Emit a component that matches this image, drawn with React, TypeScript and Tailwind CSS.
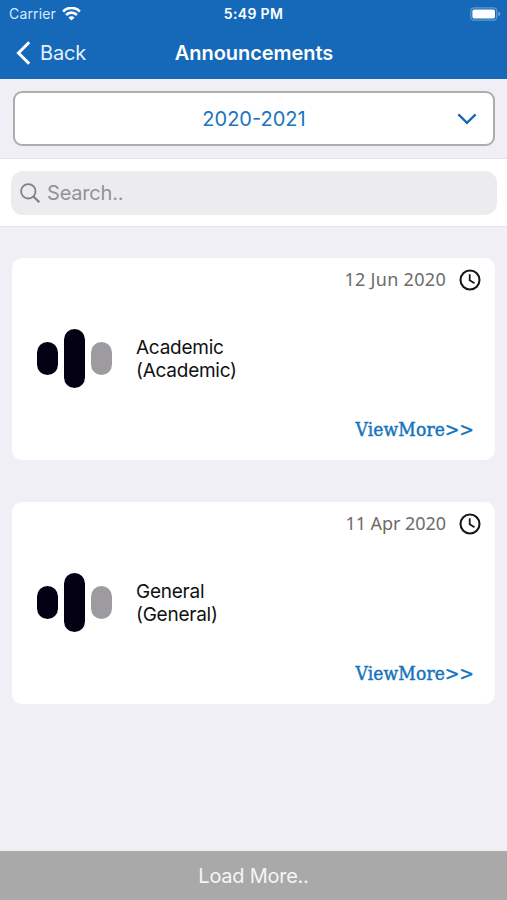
const announcements = [
  { title: "Academic", category: "(Academic)", date: "12 Jun 2020", dateSpacing: "tracking-[0.3px]" },
  { title: "General", category: "(General)", date: "11 Apr 2020", dateSpacing: "tracking-[-0.05px]" },
];

function Wifi() {
  return (
    <svg className="ml-[6px] h-[14px] w-[19px]" viewBox="0 0 19 14" fill="none" stroke="#fff" strokeWidth="2.7">
      <path d="M1.1 4.6C5.8-.3 13.2-.3 17.9 4.6" />
      <path d="M4.1 8c3-3.1 7.8-3.1 10.8 0" />
      <path d="M9.5 13.6 6.4 10.5c1.7-1.7 4.5-1.7 6.2 0z" fill="#fff" stroke="none" />
    </svg>
  );
}

function Battery() {
  return (
    <svg className="h-[14px] w-[31px]" viewBox="0 0 31 14" fill="none">
      <rect x=".8" y=".8" width="26" height="12.4" rx="3.5" stroke="#6299d2" strokeWidth="1.3" />
      <rect x="2.4" y="2.5" width="22.6" height="9" rx="1.8" fill="#fff" />
      <path d="M28.4 4.8c2.4.6 2.4 3.8 0 4.4z" fill="#75a7da" />
    </svg>
  );
}

function Clock() {
  return (
    <svg className="h-[22px] w-[22px]" viewBox="0 0 22 22" fill="none" stroke="#171717">
      <circle cx="11" cy="11" r="9.5" strokeWidth="2.1" />
      <path d="M10.7 5.2v6l4.8 3" strokeWidth="1.8" />
    </svg>
  );
}

function Card({ item }: { item: (typeof announcements)[number] }) {
  return (
    <article className="flex h-[202px] flex-col rounded-[10px] bg-white">
      <div className="flex h-[43px] items-center justify-end pr-[14px]">
        <time className={`mr-[13px] font-['Noto_Sans',sans-serif] text-[18px] text-[#6c6c6c] ${item.dateSpacing}`}>{item.date}</time>
        <Clock />
      </div>
      <div className="flex h-[115px] items-center pl-[25px]">
        <div className="flex items-center gap-[6px]">
          <div className="h-[33px] w-[21px] rounded-full bg-[#030014]" />
          <div className="h-[59px] w-[21px] rounded-full bg-[#030014]" />
          <div className="h-[33px] w-[21px] rounded-full bg-[#9d9b9f]" />
        </div>
        <div className="ml-[24px] text-[19px] leading-[23px] tracking-[-0.25px] text-[#111]">
          <h2>{item.title}</h2>
          <p>{item.category}</p>
        </div>
      </div>
      <div className="flex h-[26px] items-center justify-end pr-[21px]">
        <button className="font-['DejaVu_Serif_Condensed','DejaVu_Serif',serif] text-[19px] leading-[26px] tracking-[0.15px] text-[#1574bd] [-webkit-text-stroke:0.45px_#1574bd]">ViewMore&gt;&gt;</button>
      </div>
    </article>
  );
}

export default function App() {
  return (
    <div className="flex h-[900px] w-full flex-col bg-[#f0eff5] font-['Inter',sans-serif]">
      <header className="h-[79px] bg-[#1569b8] text-white">
        <div className="grid h-[27px] grid-cols-[1fr_auto_1fr] items-center pr-[6px] pl-[9px]">
          <div className="flex items-center text-[14px] text-[#d9eaff]">
            <span className="tracking-[0.15px]">Carrier</span>
            <Wifi />
          </div>
          <span className="-ml-[3px] text-[14px] font-semibold tracking-[0.35px]">5:49 PM</span>
          <div className="flex justify-end"><Battery /></div>
        </div>
        <div className="grid h-[52px] grid-cols-[1fr_auto_1fr] items-center px-[16px]">
          <button className="flex items-center gap-[9px] text-left text-[20px] tracking-[-0.2px] text-[#e2f0ff]">
            <svg className="h-[24px] w-[15px]" viewBox="0 0 15 24" fill="none" stroke="#fff" strokeWidth="3">
              <path d="M13.2 1.3 2.5 12l10.7 10.7" />
            </svg>
            <span>Back</span>
          </button>
          <h1 className="ml-px text-[20px] font-semibold tracking-[-0.05px]">Announcements</h1>
        </div>
      </header>
      <div className="h-[80px] border-b border-[#e5e4e9] pt-[12px] pr-[12px] pl-[13px]">
        <button className="grid h-[55px] w-full grid-cols-[1fr_auto_1fr] items-center rounded-[9px] border-2 border-[#adadad] bg-white text-[20px] text-[#1b74bd]">
          <span />
          <span>2020-2021</span>
          <svg className="mr-[16px] h-[12px] w-[20px] justify-self-end" viewBox="0 0 20 12" fill="none" stroke="#1767b3" strokeWidth="2.3">
            <path d="m1.4 1.4 8.6 8.5 8.6-8.5" />
          </svg>
        </button>
      </div>
      <div className="h-[68px] border-b border-[#e5e4e9] bg-white pt-[12px] pr-[10px] pl-[11px]">
        <label className="flex h-[44px] items-center rounded-[12px] bg-[#ececee] pl-[9px]">
          <svg className="h-[21px] w-[21px]" viewBox="0 0 21 21" fill="none" stroke="#818185" strokeWidth="1.8">
            <circle cx="8.3" cy="8.3" r="7.2" />
            <path d="m13.5 13.5 5.8 5.8" strokeWidth="2.3" />
          </svg>
          <span className="ml-[6px] text-[20px] tracking-[-0.2px] text-[#929296]">Search..</span>
        </label>
      </div>
      <main className="flex flex-1 flex-col gap-[42px] px-[12px] pt-[31px]">
        {announcements.map((item) => <Card key={item.title} item={item} />)}
      </main>
      <button className="h-[49px] bg-[#a9a9a9] pt-px text-[20px] tracking-[-0.25px] text-[#f5f5f5]">Load More..</button>
    </div>
  );
}
